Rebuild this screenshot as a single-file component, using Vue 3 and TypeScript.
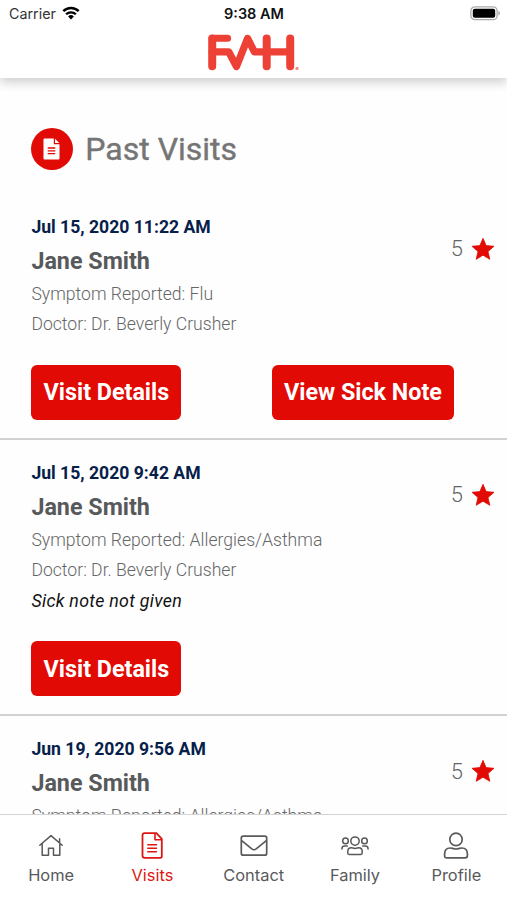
<script setup lang="ts">
interface Visit {
  id: number
  date: string
  patient: string
  symptom: string
  doctor: string
  rating: number
  hasSickNote: boolean
}

interface Tab {
  key: string
  label: string
}

const visits: Visit[] = [
  { id: 1, date: 'Jul 15, 2020 11:22 AM', patient: 'Jane Smith', symptom: 'Flu', doctor: 'Dr. Beverly Crusher', rating: 5, hasSickNote: true },
  { id: 2, date: 'Jul 15, 2020 9:42 AM', patient: 'Jane Smith', symptom: 'Allergies/Asthma', doctor: 'Dr. Beverly Crusher', rating: 5, hasSickNote: false },
  { id: 3, date: 'Jun 19, 2020 9:56 AM', patient: 'Jane Smith', symptom: 'Allergies/Asthma', doctor: 'Dr. Beverly Crusher', rating: 5, hasSickNote: false },
]

const tabs: Tab[] = [
  { key: 'home', label: 'Home' },
  { key: 'visits', label: 'Visits' },
  { key: 'contact', label: 'Contact' },
  { key: 'family', label: 'Family' },
  { key: 'profile', label: 'Profile' },
]
const activeTab = 'visits'
</script>

<template>
  <div class="screen">
    <header class="header">
      <div class="status">
        <div class="carrier">
          <span>Carrier</span>
          <svg class="wifi" viewBox="0 0 18 14" width="18" height="14">
            <path d="M1.3 5.1a11 11 0 0 1 15.4 0" fill="none" stroke="#000" stroke-width="2.5" />
            <path d="M4.1 8.3a7 7 0 0 1 9.8 0" fill="none" stroke="#000" stroke-width="2.3" />
            <path d="M6.1 10.5a4.1 4.1 0 0 1 5.8 0L9 13.4z" fill="#000" />
          </svg>
        </div>
        <span class="clock">9:38 AM</span>
        <svg class="battery" viewBox="0 0 31 15" width="31" height="15">
          <rect x=".9" y=".9" width="26.2" height="12.8" rx="4" fill="#fff" stroke="#aaa" stroke-width="1.3" />
          <rect x="2.8" y="2.8" width="22.4" height="9" rx="2" fill="#000" />
          <path d="M28.4 5.1c2.1.5 2.1 3.9 0 4.4z" fill="#aaa" />
        </svg>
      </div>
      <svg class="logo" viewBox="0 0 92 38" width="92" height="38">
        <g fill="none" stroke="#ee4136" stroke-linecap="round" stroke-linejoin="round">
          <path d="M20.6 5.2H5.2" stroke-width="7" />
          <path d="M5.2 5.5V33.2M59.7 5.4v27.8M83.2 5.4v27.8" stroke-width="8" />
          <path d="M5.2 18.8h16.5L29.5 33.500 40.600 5.400l6.800 13.400h35.800" stroke-width="7.300" />
        </g>
        <circle cx="90" cy="35.400" r="1.700" fill="#f48b83" />
      </svg>
    </header>

    <main class="content">
      <div class="heading">
        <span class="badge">
          <svg viewBox="0 0 18 22" width="18" height="22">
            <path d="M1.800.5h9v5.800h5.700v13.900c0 .8-.5 1.300-1.300 1.300H1.800C1 21.500.5 21 .5 20.200V1.800C.5 1 1 .5 1.800.5z" fill="#fff" />
            <path d="M12 .7 16.400 5.100H12z" fill="#fff" />
            <path d="M4.700 10h7.600M4.700 12.800h7.600M4.700 15.600h7.600" stroke="#e20a04" stroke-width="1.300" />
          </svg>
        </span>
        <h1>Past Visits</h1>
      </div>

      <article v-for="visit in visits" :key="visit.id" class="visit">
        <div class="summary">
          <div class="facts">
            <div class="date">{{ visit.date }}</div>
            <h2>{{ visit.patient }}</h2>
            <p>Symptom Reported: {{ visit.symptom }}</p>
            <p>Doctor: {{ visit.doctor }}</p>
            <p v-if="!visit.hasSickNote" class="note">Sick note not given</p>
          </div>
          <div class="rating">
            <span>{{ visit.rating }}</span>
            <svg viewBox="0 0 24 24" width="24" height="24">
              <path d="M12 1.300 15.100 8.600 23 9.300 17 14.500 18.800 22.300 12 18.200 5.200 22.300 7 14.500 1 9.300 8.900 8.600z" fill="#e20a04" stroke="#e20a04" stroke-width=".8" stroke-linejoin="round" />
            </svg>
          </div>
        </div>
        <div class="actions">
          <button type="button" class="details">Visit Details</button>
          <button v-if="visit.hasSickNote" type="button" class="sick">View Sick Note</button>
        </div>
      </article>
    </main>

    <nav class="tabs">
      <a v-for="tab in tabs" :key="tab.key" class="tab" :class="{ active: tab.key === activeTab }">
        <svg viewBox="0 0 30 30" width="30" height="30" fill="none" stroke="currentColor" stroke-width="1.500" stroke-linecap="round" stroke-linejoin="round">
          <template v-if="tab.key === 'home'">
            <path d="M3.800 14.300 15 4.600l11.200 9.700M6.200 12.300v11.900h6.300v-6.900h5v6.900h6.300V12.300M23.600 11.800V7.700" />
          </template>
          <template v-else-if="tab.key === 'visits'">
            <path d="M7.800 2.200h11.600l5.400 5.600v17.400c0 1-.6 1.600-1.600 1.600H7.800c-1.500 0-2.300-.8-2.300-2.300V4.500c0-1.500.8-2.300 2.300-2.300z" stroke-width="1.800" />
            <path d="M18 2.700v6.100h6.300" stroke-width="1.600" />
            <path d="M10.800 13.800h8.700M10.800 17.300h8.700M10.800 20.800h8.700" stroke-width="1.500" />
          </template>
          <template v-else-if="tab.key === 'contact'">
            <rect x="2.300" y="5.200" width="25.400" height="19" rx="2" stroke-width="1.700" />
            <path d="m3 9.900 9.800 8q2.200 1.700 4.400 0l9.800-8" stroke-width="1.700" />
          </template>
          <template v-else-if="tab.key === 'family'">
            <circle cx="15" cy="10.100" r="4.200" />
            <circle cx="5.500" cy="9.900" r="2.800" />
            <circle cx="24.500" cy="9.900" r="2.800" />
            <path d="M9.500 23.500c-1 0-1.700-.6-1.700-1.600v-1.400c0-2.200 1.300-3.700 3.500-3.700 1.200 0 2 .6 3.700.6s2.500-.6 3.700-.6c2.200 0 3.500 1.500 3.500 3.700v1.400c0 1-.7 1.600-1.700 1.600zM1.900 18.100c0-2 1-3 2.600-3h2.800M28.100 18.100c0-2-1-3-2.600-3h-2.800" />
          </template>
          <template v-else>
            <circle cx="15" cy="8.400" r="6.200" stroke-width="1.700" />
            <path d="M5.800 26.800c-1.400 0-2.200-.7-2.200-2v-1.700c0-3.800 2.100-6.100 5.600-6.100 2 0 3 1 5.800 1s3.800-1 5.800-1c3.500 0 5.600 2.300 5.600 6.100v1.700c0 1.300-.8 2-2.200 2z" stroke-width="1.700" />
          </template>
        </svg>
        <span>{{ tab.label }}</span>
      </a>
    </nav>
  </div>
</template>

<style>
body {
  background: #fff;
}
</style>

<style scoped>
.screen {
  display: flex;
  flex-direction: column;
  width: 507px;
  height: 900px;
  overflow: hidden;
  background: #fefefe;
  font-family: Roboto, "Liberation Sans", sans-serif;
}

.header {
  flex: none;
  z-index: 1;
  display: flex;
  flex-direction: column;
  align-items: center;
  height: 78px;
  background: #fff;
  box-shadow: 0 4px 10px rgba(0, 0, 0, 0.2);
}

.status {
  display: grid;
  grid-template-columns: 1fr auto 1fr;
  align-items: center;
  width: 100%;
  height: 28px;
  padding: 0 7px 0 9px;
  box-sizing: border-box;
  color: #111;
  font: 400 14.3px/28px Inter, sans-serif;
}

.carrier {
  display: flex;
  align-items: center;
  gap: 6px;
  color: #333;
}

.wifi {
  margin-top: -3px;
}

.clock {
  margin-right: 1px;
  font-size: 14.500px;
  font-weight: 600;
}

.battery {
  justify-self: end;
  margin: -2px -1px 0 0;
}

.logo {
  margin: 5px 1px 0 0;
}

.content {
  flex: 1;
  min-height: 0;
  overflow: hidden;
}

.heading {
  display: flex;
  align-items: center;
  gap: 12px;
  height: 115.600px;
  padding: 26px 31px 0 31.300px;
  box-sizing: border-box;
}

.badge {
  display: flex;
  align-items: center;
  justify-content: center;
  width: 42px;
  height: 42px;
  border-radius: 50%;
  background: #e20a04;
}

h1 {
  margin: 0;
  color: #757575;
  font-size: 32px;
  font-weight: 400;
  line-height: 42px;
  -webkit-text-stroke: 0.4px #757575;
}

.visit {
  padding: 17px 12px 17.700px 31.400px;
  border-bottom: 2px solid #d2d2d2;
}

.summary {
  display: flex;
  justify-content: space-between;
}

.date {
  color: #06204a;
  font-size: 17.600px;
  font-weight: 700;
  line-height: 32px;
}

h2 {
  margin: 0;
  color: #58595b;
  font-size: 23.300px;
  font-weight: 700;
  line-height: 36px;
}

p {
  margin: 0;
  color: #666;
  font-size: 17.600px;
  font-weight: 300;
  line-height: 30.500px;
}

.note {
  color: #111;
  font-size: 17.800px;
  font-weight: 400;
  font-style: italic;
  letter-spacing: 0.28px;
}

.rating {
  display: flex;
  align-items: center;
  gap: 8px;
  height: 24px;
  margin-top: 26px;
  color: #666;
  font-size: 22px;
  font-weight: 300;
}

.actions {
  display: flex;
  justify-content: space-between;
  margin-top: 25.300px;
  padding-right: 41px;
}

button {
  height: 55px;
  padding: 0;
  border: 0;
  border-radius: 6px;
  background: #e20a04;
  color: #fff;
  font-family: inherit;
  font-size: 23.300px;
  font-weight: 700;
}

.details {
  width: 150px;
}

.sick {
  width: 182px;
}

.tabs {
  flex: none;
  display: grid;
  grid-template-columns: repeat(5, 1fr);
  height: 86px;
  padding-left: 0.500px;
  box-sizing: border-box;
  border-top: 1px solid #d4d4d4;
  background: #fff;
}

.tab {
  display: flex;
  flex-direction: column;
  align-items: center;
  padding-top: 16px;
  color: #58595b;
  font-family: Inter, sans-serif;
  font-size: 16.400px;
  line-height: 28px;
}

.active {
  color: #dc1713;
}
</style>
